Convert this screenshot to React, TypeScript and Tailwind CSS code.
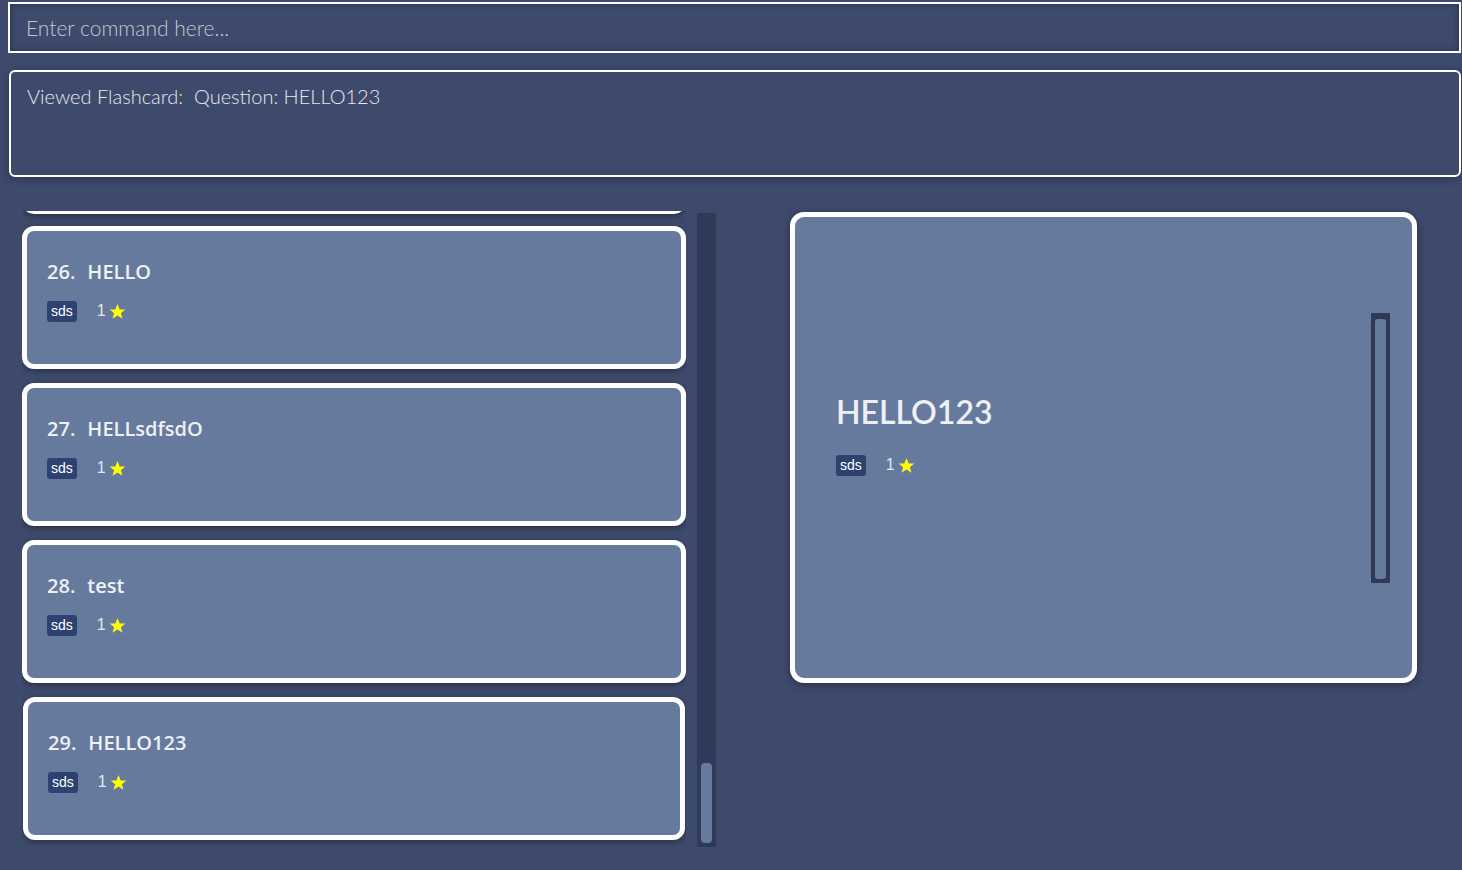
import React from "react";

// ─── Data ─────────────────────────────────────────────────────────────────────

const cards = [
  { n: 26, q: "HELLO" },
  { n: 27, q: "HELLsdfsdO" },
  { n: 28, q: "test" },
  { n: 29, q: "HELLO123" },
];

// ─── Pieces ───────────────────────────────────────────────────────────────────

const Star: React.FC<{ size?: number }> = ({ size = 17 }) => (
  <svg width={size} height={size} viewBox="0 0 24 24">
    <polygon
      points="12,1.5 15,9 23,9.3 16.8,14.3 19,22.3 12,17.8 5,22.3 7.2,14.3 1,9.3 9,9"
      fill="#ffff00"
    />
  </svg>
);

const Meta: React.FC = () => (
  <div className="flex items-center font-['Liberation_Sans',Arial,sans-serif]">
    <span className="rounded-[3px] bg-[#2d4270] px-[4px] py-[2px] text-[14px] leading-[17px] text-white">
      sds
    </span>
    <span className="ml-[20px] text-[16px] text-[#e3e6ed]">1</span>
    <span className="ml-[3px]">
      <Star />
    </span>
  </div>
);

const cardShell =
  "h-[143px] shrink-0 rounded-[12px] border-[5px] border-white bg-[#667a9e] shadow-[0_2px_6px_rgba(0,0,0,0.35)]";

const ListCard: React.FC<{ n: number; q: string; selected?: boolean }> = ({ n, q, selected }) => (
  <div className={`${cardShell} pl-[20px] pt-[28px] ${selected ? "ml-[1px] w-[662px]" : "w-[664px]"}`}>
    <p className="font-['Open_Sans',sans-serif] text-[20px] font-semibold leading-[26px] text-[#eef0f4]">
      {n}.<span className="ml-[12px]">{q}</span>
    </p>
    <div className="mt-[14px]">
      <Meta />
    </div>
  </div>
);

// ─── App ──────────────────────────────────────────────────────────────────────

const App: React.FC = () => {
  return (
    <div className="h-[870px] w-[1462px] overflow-hidden bg-[#3d4a6b] font-['Lato',sans-serif]">
      {/* Command box */}
      <div className="pl-[8px] pt-[2px]">
        <div className="flex h-[51px] w-[1453px] items-center border-2 border-white bg-[#3d4a6b] pl-[16px] shadow-[inset_0_0_6px_rgba(0,0,0,0.35)]">
          <span className="text-[21px] font-light text-[#c4c8d2]">Enter command here...</span>
        </div>
      </div>

      {/* Result box */}
      <div className="pl-[9px] pt-[17px]">
        <div className="h-[107px] w-[1452px] rounded-[6px] border-2 border-white bg-[#3d4a6b] pl-[16px] pt-[9px] shadow-[0_2px_8px_rgba(0,0,0,0.3)]">
          <span className="text-[20px] font-light text-[#e6e9ef]">
            Viewed Flashcard:&nbsp; Question: HELLO123
          </span>
        </div>
      </div>

      {/* Bottom row */}
      <div className="mt-[34px] flex items-start">
        {/* Flashcard list, scrolled to the bottom */}
        <div className="ml-[22px] flex h-[636px]">
          <div className="flex h-full w-[664px] flex-col justify-end gap-[14px] overflow-hidden pb-[7px]">
            <div className={`${cardShell} -mb-[2px] w-[664px]`} />
            {cards.map((c) => (
              <ListCard key={c.n} n={c.n} q={c.q} selected={c.n === 29} />
            ))}
          </div>
          <div className="ml-[11px] mt-[2px] flex h-[634px] w-[19px] flex-col justify-end bg-[#2e3a58] px-[4px] pb-[4px]">
            <div className="h-[80px] rounded-[4px] bg-[#667a9e]" />
          </div>
        </div>

        {/* Viewed card */}
        <div className="ml-[74px] mt-[1px] flex h-[471px] w-[627px] items-center rounded-[14px] border-[5px] border-white bg-[#667a9e] shadow-[0_2px_8px_rgba(0,0,0,0.35)]">
          <div className="-mt-[24px] flex-1 pl-[41px]">
            <p className="text-[32px] font-semibold leading-[36px] text-[#eef0f4]">HELLO123</p>
            <div className="mt-[23px]">
              <Meta />
            </div>
          </div>
          <div className="mr-[22px] h-[270px] w-[19px] bg-[#2e3a58] p-[4px] pt-[6px]">
            <div className="h-full rounded-[3px] bg-[#667a9e]" />
          </div>
        </div>
      </div>
    </div>
  );
};

export default App;
